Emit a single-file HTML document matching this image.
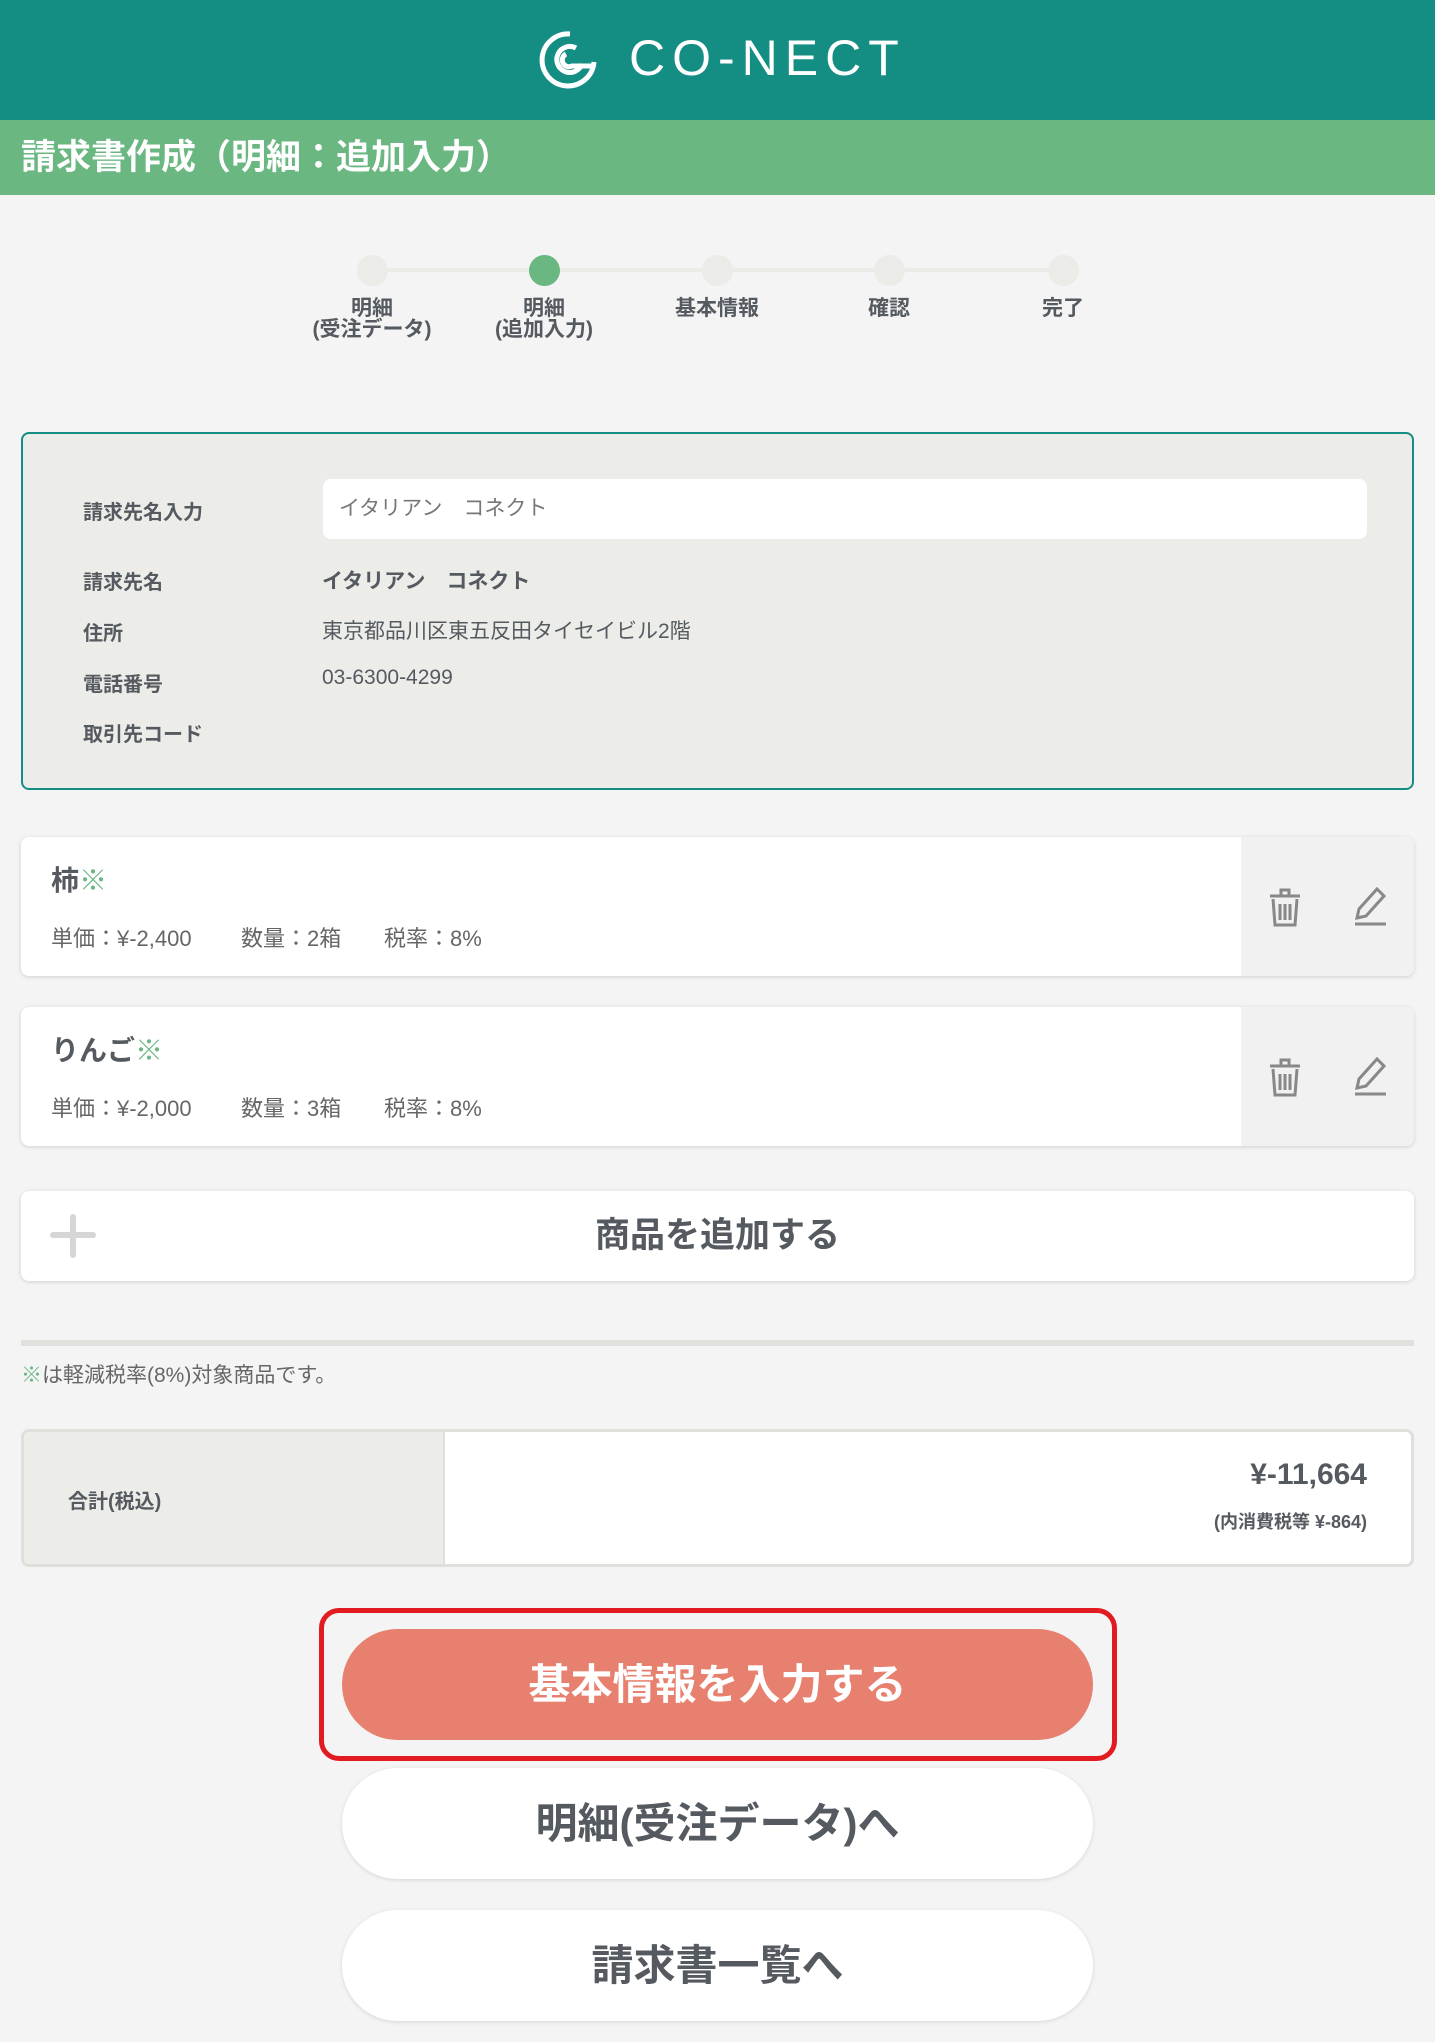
<!DOCTYPE html>
<html><head><meta charset="utf-8"><style>
*{box-sizing:border-box;margin:0;padding:0}
body{width:1435px;height:2042px;background:#f3f4f3;font-family:"Liberation Sans","Noto Sans CJK JP",sans-serif;color:#555a60;position:relative;overflow:hidden}
.abs{position:absolute}
.hdr{left:0;top:0;width:1435px;height:120px;background:#148d83}
.logo{left:629px;top:28px;font-size:50px;color:#fff;letter-spacing:7px;line-height:60px;font-weight:400}
.bar{left:0;top:120px;width:1435px;height:75px;background:#6ab782;color:#fff;font-size:35px;font-weight:bold;padding-left:21px;line-height:75px}
.line{top:268px;left:372px;width:691px;height:4px;background:#ebece8}
.dot{width:31px;height:31px;border-radius:50%;background:#ebece8;top:255px}
.sl{font-size:21px;font-weight:bold;text-align:center;width:160px;line-height:21px;top:298px}
.box{left:21px;top:432px;width:1393px;height:358px;border:2px solid #148d83;border-radius:8px;background:#ecede9}
.lbl{left:83px;font-size:20px;font-weight:bold}
.val{left:322px;font-size:21px}
.inp{left:323px;top:479px;width:1044px;height:60px;background:#fff;border-radius:8px;font-size:21px;color:#777;padding-left:16px;line-height:60px}
.card{left:21px;width:1393px;height:139px;background:#fff;border-radius:8px;box-shadow:0 1px 4px rgba(0,0,0,.15);overflow:hidden}
.card .g{position:absolute;right:0;top:0;width:173px;height:100%;background:#f1f1f1}
.nm{position:absolute;left:30px;top:22px;font-size:28px;font-weight:bold}
.nm span{color:#6ab782}
.dt{position:absolute;top:84px;font-size:22px;color:#666}
.add{left:21px;top:1191px;width:1393px;height:90px;background:#fff;border-radius:8px;box-shadow:0 1px 4px rgba(0,0,0,.15);text-align:center;font-size:35px;font-weight:bold;line-height:90px}
.btn{left:342px;width:751px;height:111px;border-radius:56px;text-align:center;line-height:111px;font-size:42px;font-weight:bold}
</style></head><body>
<div class="abs hdr"></div>
<svg class="abs" style="left:536px;top:28px" width="66" height="64" viewBox="0 0 66 64"><path d="M34 6 A26 26 0 1 0 58 34" fill="none" stroke="#fff" stroke-width="5"/><path d="M40 20 A13 13 0 1 0 46 36 M30 26 A6 6 0 1 0 36 38 L58 38" fill="none" stroke="#fff" stroke-width="5"/></svg>
<div class="abs logo">CO-NECT</div>
<div class="abs bar">請求書作成（明細：追加入力）</div>
<div class="abs line"></div>
<div class="abs dot" style="left:357px"></div>
<div class="abs dot" style="left:529px;background:#6ab782"></div>
<div class="abs dot" style="left:702px"></div>
<div class="abs dot" style="left:874px"></div>
<div class="abs dot" style="left:1048px"></div>
<div class="abs sl" style="left:292px">明細<br>(受注データ)</div>
<div class="abs sl" style="left:464px">明細<br>(追加入力)</div>
<div class="abs sl" style="left:637px">基本情報</div>
<div class="abs sl" style="left:809px">確認</div>
<div class="abs sl" style="left:983px">完了</div>
<div class="abs box"></div>
<div class="abs lbl" style="top:496px">請求先名入力</div>
<div class="abs inp">イタリアン　コネクト</div>
<div class="abs lbl" style="top:566px">請求先名</div>
<div class="abs val" style="top:565px;font-weight:bold">イタリアン　コネクト</div>
<div class="abs lbl" style="top:617px">住所</div>
<div class="abs val" style="top:615px">東京都品川区東五反田タイセイビル2階</div>
<div class="abs lbl" style="top:668px">電話番号</div>
<div class="abs val" style="top:666px">03-6300-4299</div>
<div class="abs lbl" style="top:718px">取引先コード</div>

<div class="abs card" style="top:837px"><div class="g"></div><div class="nm">柿<span>※</span></div>
<div class="dt" style="left:30px">単価：¥-2,400</div><div class="dt" style="left:220px">数量：2箱</div><div class="dt" style="left:363px">税率：8%</div>
<svg style="position:absolute;left:1246px;top:50px" width="36" height="40" viewBox="0 0 36 40" fill="none" stroke="#888" stroke-width="3"><path d="M3 9h30M14 9V3h8v6M6 12l2 26h20l2-26M13 17v16M18 17v16M23 17v16"/></svg>
<svg style="position:absolute;left:1332px;top:50px" width="36" height="40" viewBox="0 0 36 40" fill="none" stroke="#888" stroke-width="3"><path d="M4 31l2-9L24 2l7 7L13 29z M2 37h31"/></svg></div>

<div class="abs card" style="top:1007px"><div class="g"></div><div class="nm">りんご<span>※</span></div>
<div class="dt" style="left:30px">単価：¥-2,000</div><div class="dt" style="left:220px">数量：3箱</div><div class="dt" style="left:363px">税率：8%</div>
<svg style="position:absolute;left:1246px;top:50px" width="36" height="40" viewBox="0 0 36 40" fill="none" stroke="#888" stroke-width="3"><path d="M3 9h30M14 9V3h8v6M6 12l2 26h20l2-26M13 17v16M18 17v16M23 17v16"/></svg>
<svg style="position:absolute;left:1332px;top:50px" width="36" height="40" viewBox="0 0 36 40" fill="none" stroke="#888" stroke-width="3"><path d="M4 31l2-9L24 2l7 7L13 29z M2 37h31"/></svg></div>

<div class="abs add">商品を追加する</div>
<div class="abs" style="left:50px;top:1232px;width:46px;height:6px;background:#d6d6d6;border-radius:3px"></div>
<div class="abs" style="left:70px;top:1214px;width:6px;height:44px;background:#d6d6d6;border-radius:3px"></div>
<div class="abs" style="left:21px;top:1340px;width:1393px;height:6px;background:#e0e1dc"></div>
<div class="abs" style="left:21px;top:1359px;font-size:21px;color:#666"><span style="color:#6ab782">※</span>は軽減税率(8%)対象商品です。</div>
<div class="abs" style="left:21px;top:1429px;width:1393px;height:138px;border:3px solid #dfe0dc;border-radius:8px;background:#fff;overflow:hidden"><div style="position:absolute;left:0;top:0;width:421px;height:100%;background:#ecede9;border-right:2px solid #dfe0dc"></div></div>
<div class="abs" style="left:68px;top:1485px;font-size:20px;font-weight:bold">合計(税込)</div>
<div class="abs" style="right:68px;top:1458px;font-size:30px;font-weight:bold">¥-11,664</div>
<div class="abs" style="right:68px;top:1508px;font-size:18px;font-weight:bold">(内消費税等 ¥-864)</div>
<div class="abs" style="left:319px;top:1608px;width:798px;height:153px;border:5px solid #e21b23;border-radius:20px"></div>
<div class="abs btn" style="top:1629px;background:#e88070;color:#fff">基本情報を入力する</div>
<div class="abs btn" style="top:1768px;background:#fff;box-shadow:0 1px 4px rgba(0,0,0,.12)">明細(受注データ)へ</div>
<div class="abs btn" style="top:1910px;background:#fff;box-shadow:0 1px 4px rgba(0,0,0,.12)">請求書一覧へ</div>
</body></html>
